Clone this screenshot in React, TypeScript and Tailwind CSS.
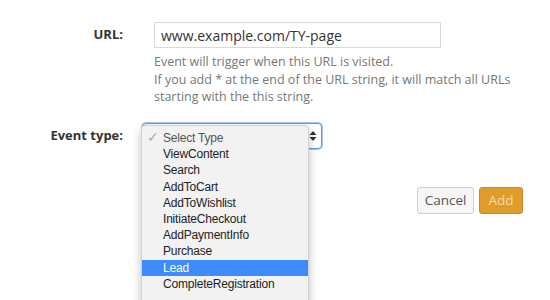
import React from "react";

const items = [
  "ViewContent",
  "Search",
  "AddToCart",
  "AddToWishlist",
  "InitiateCheckout",
  "AddPaymentInfo",
  "Purchase",
  "Lead",
  "CompleteRegistration",
];

export default function App() {
  return (
    <div className="relative w-[550px] h-[300px] overflow-hidden bg-white font-['Open_Sans',sans-serif] text-[13px] text-[#333]">
      <div className="pt-[22px]">
        <div className="flex items-center">
          <div className="w-[123px] text-right font-bold text-[#333]">URL:</div>
          <div className="ml-[31px] w-[287px] h-[26px] border border-[#d9d9d9] flex items-center px-[6px] text-[14px] text-[#333]">
            www.example.com/TY-page
          </div>
        </div>
        <div className="ml-[154px] mt-[5px] leading-[17.5px] text-[#777] text-[12.5px]">
          <div>Event will trigger when this URL is visited.</div>
          <div>If you add * at the end of the URL string, it will match all URLs</div>
          <div>starting with the this string.</div>
        </div>
        <div className="flex items-center mt-[17px]">
          <div className="w-[123px] text-right font-bold text-[#333]">Event type:</div>
          <div className="ml-[19px] w-[180px] h-[26px] rounded-[4px] border border-[#5b9dd9] shadow-[0_0_0_1px_#a8c8ee] bg-white flex items-center justify-end pr-[4px]">
            <svg width="8" height="12" viewBox="0 0 8 12">
              <path d="M4 1 L7.5 5 H0.5 Z" fill="#333" />
              <path d="M4 11 L7.5 7 H0.5 Z" fill="#333" />
            </svg>
          </div>
        </div>
        <div className="flex justify-end gap-[5px] pr-[27px] mt-[38px]">
          <div className="w-[57px] h-[27px] rounded-[3px] border border-[#cfcfcf] bg-[#f6f6f6] flex items-center justify-center text-[13.5px] text-[#555]">
            Cancel
          </div>
          <div className="w-[44px] h-[27px] rounded-[3px] border border-[#c98a1f] bg-[#e09c2b] flex items-center justify-center text-[13.5px] text-[#f6dca9]">
            Add
          </div>
        </div>
      </div>

      <div className="absolute left-[141px] top-[125px] w-[168px] h-[200px] bg-[#f2f2f2] rounded-[4px] border border-[#d2d2d2] shadow-[0_4px_10px_rgba(0,0,0,0.25)] pt-[4px] font-['Liberation_Sans',Arial,sans-serif] text-[12px] tracking-[-0.2px] leading-[16.2px] text-[#222]">
        <div className="relative h-[16.2px] pl-[21px]">
          <span className="absolute left-[5px] top-[-1px] text-[14px] text-[#aaa]">✓</span>
          <span className="text-[#555]">Select Type</span>
        </div>
        {items.map((it) => (
          <div
            key={it}
            className={
              it === "Lead"
                ? "h-[16.2px] pl-[21px] bg-[#3d8bfd] text-white"
                : "h-[16.2px] pl-[21px]"
            }
          >
            {it}
          </div>
        ))}
      </div>
    </div>
  );
}
